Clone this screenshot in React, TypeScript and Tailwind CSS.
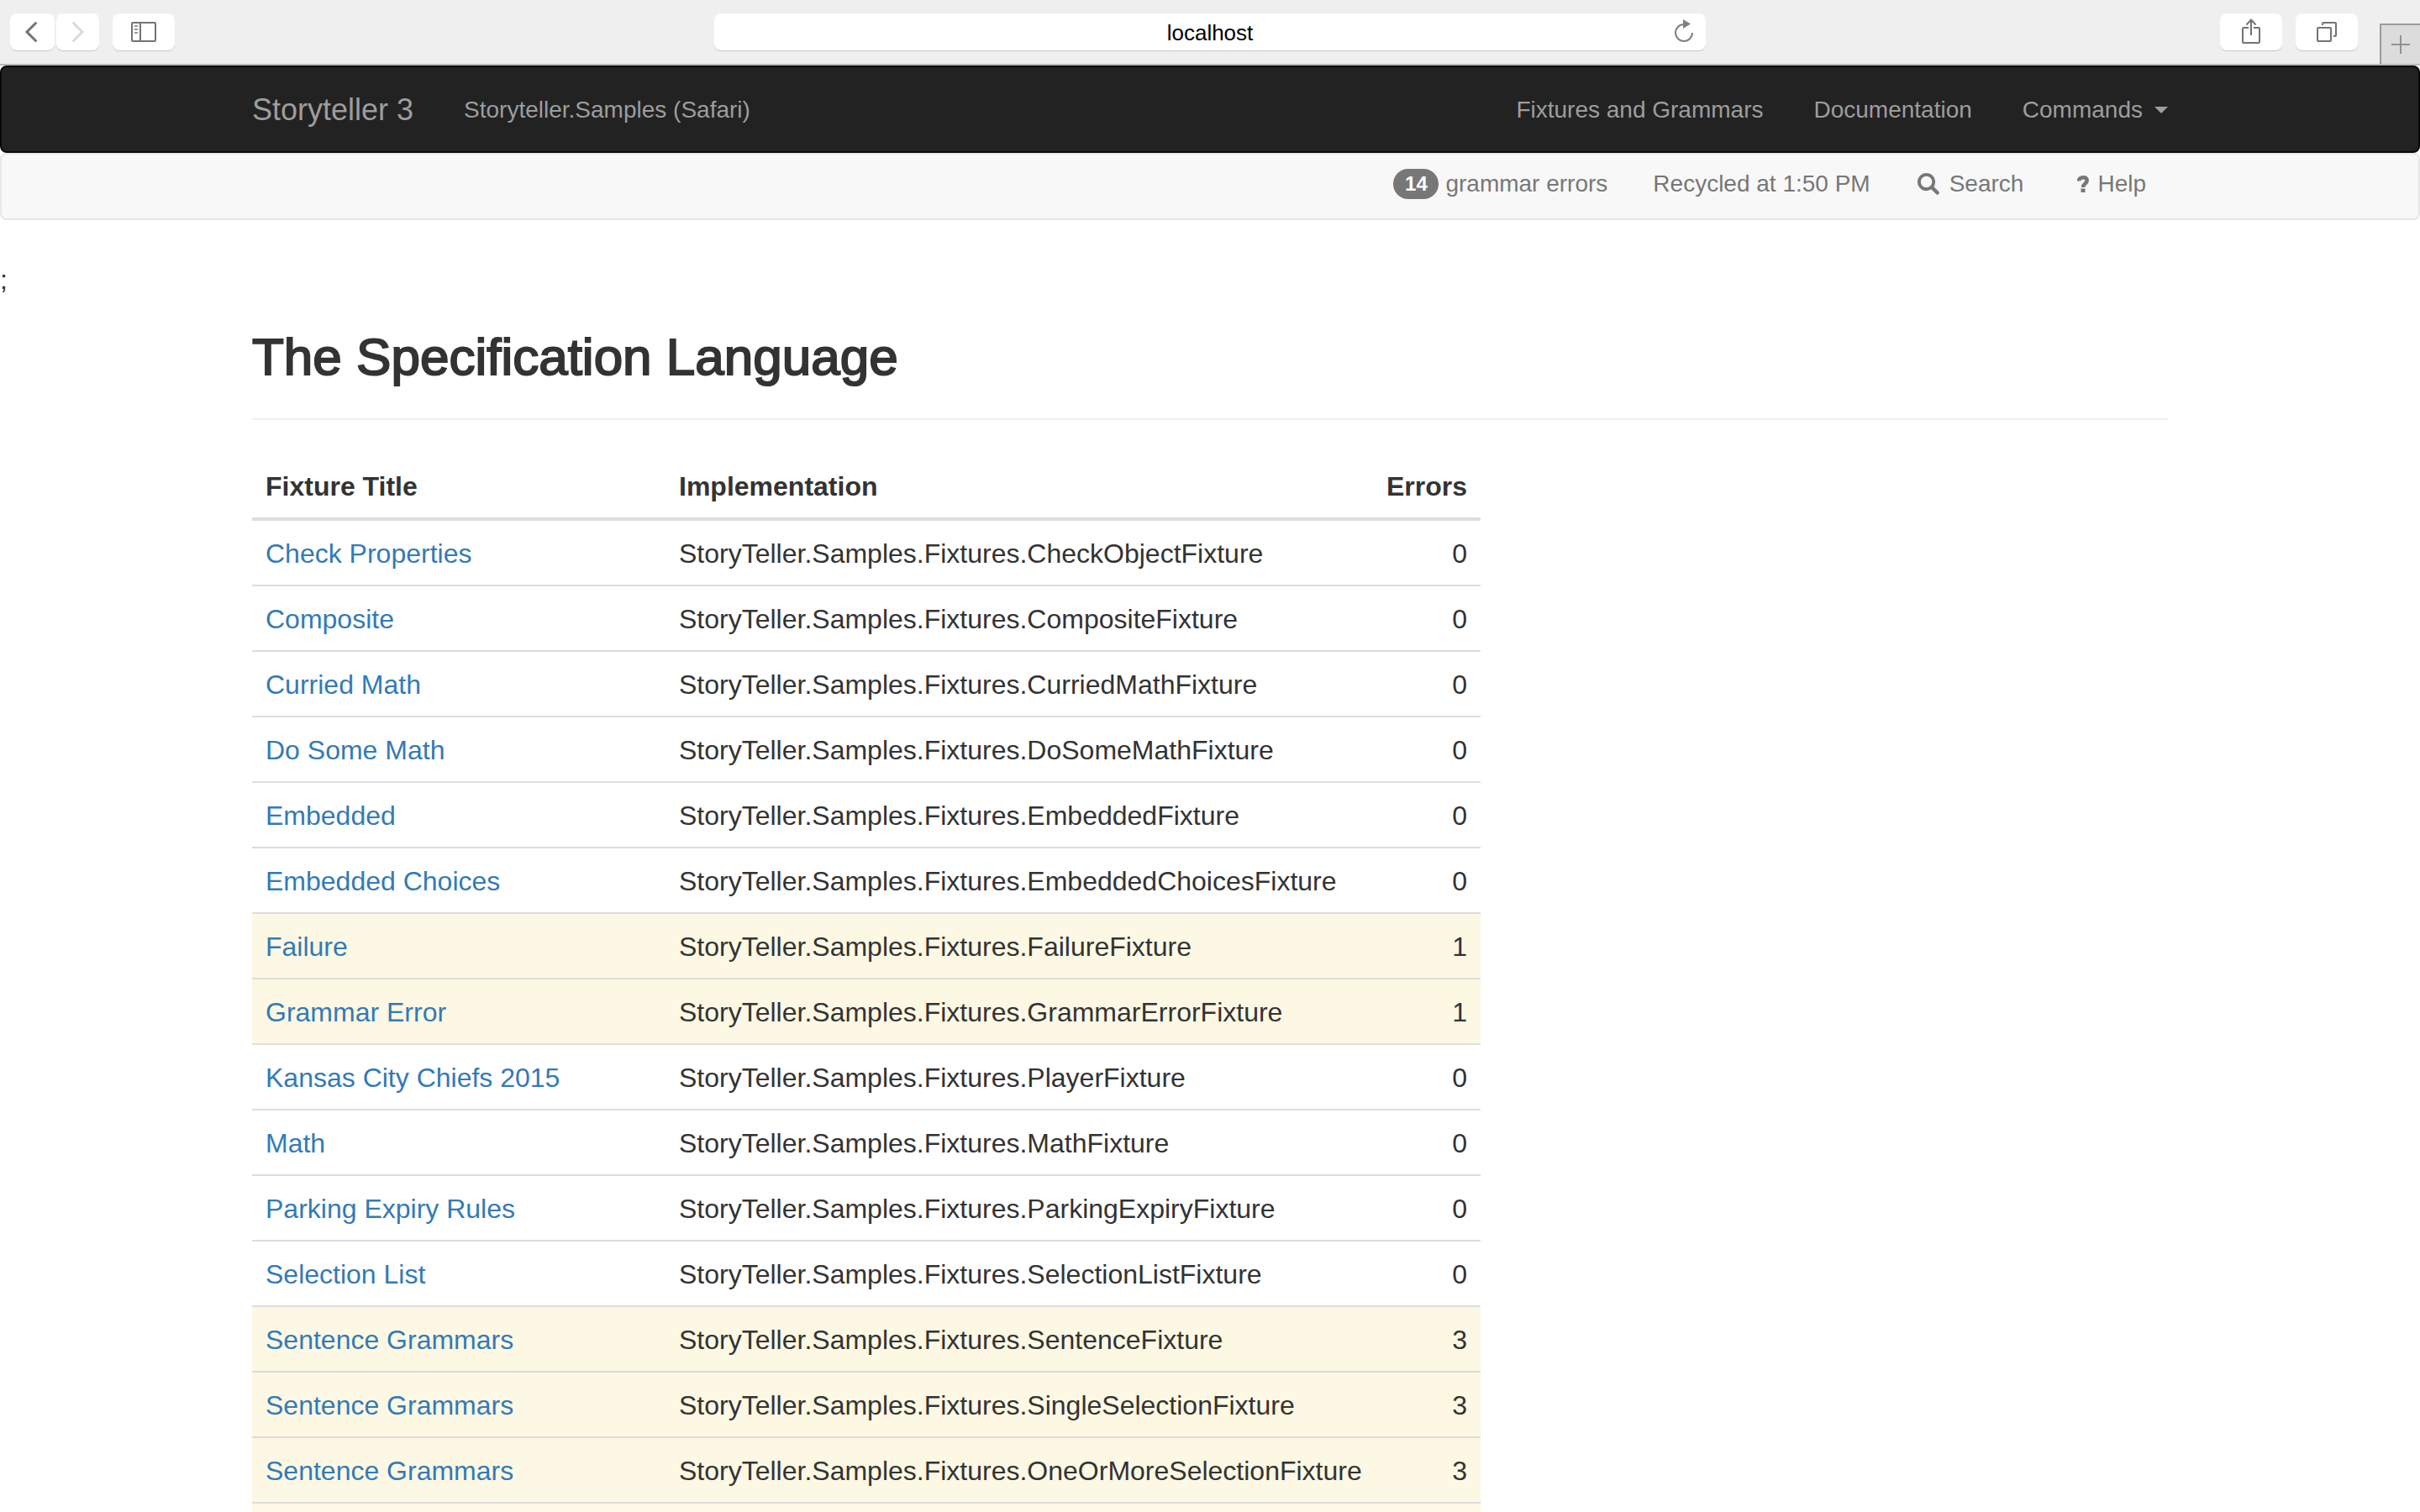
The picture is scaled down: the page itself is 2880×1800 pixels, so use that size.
import React from "react";

type Fixture = { title: string; name: string; errors: number };

const fixtures: Fixture[] = [
  { title: "Check Properties", name: "CheckObjectFixture", errors: 0 },
  { title: "Composite", name: "CompositeFixture", errors: 0 },
  { title: "Curried Math", name: "CurriedMathFixture", errors: 0 },
  { title: "Do Some Math", name: "DoSomeMathFixture", errors: 0 },
  { title: "Embedded", name: "EmbeddedFixture", errors: 0 },
  { title: "Embedded Choices", name: "EmbeddedChoicesFixture", errors: 0 },
  { title: "Failure", name: "FailureFixture", errors: 1 },
  { title: "Grammar Error", name: "GrammarErrorFixture", errors: 1 },
  { title: "Kansas City Chiefs 2015", name: "PlayerFixture", errors: 0 },
  { title: "Math", name: "MathFixture", errors: 0 },
  { title: "Parking Expiry Rules", name: "ParkingExpiryFixture", errors: 0 },
  { title: "Selection List", name: "SelectionListFixture", errors: 0 },
  { title: "Sentence Grammars", name: "SentenceFixture", errors: 3 },
  { title: "Sentence Grammars", name: "SingleSelectionFixture", errors: 3 },
  { title: "Sentence Grammars", name: "OneOrMoreSelectionFixture", errors: 3 },
];

const toolButton =
  "flex h-11 items-center justify-center rounded-lg bg-white shadow-[0_1px_0_#c6c6c6]";

function BrowserBar() {
  return (
    <header className="grid h-[78px] grid-cols-[1fr_1180px_1fr] border-b-2 border-[#b9b9b9] bg-[#efefef]">
      <div className="flex items-start pt-4 pl-3">
        <button aria-label="Back" className={`${toolButton} mr-0.5 w-[53px] pr-1`}>
          <svg width="16" height="26" viewBox="0 0 16 26" fill="none" stroke="#737373" strokeWidth="3" strokeLinecap="round">
            <path d="M13.500 2.500 3 13l10.500 10.500" />
          </svg>
        </button>
        <button aria-label="Forward" className={`${toolButton} mr-4 w-[51px]`}>
          <svg width="16" height="26" viewBox="0 0 16 26" fill="none" stroke="#dadada" strokeWidth="3" strokeLinecap="round">
            <path d="M2.500 2.500 13 13 2.500 23.500" />
          </svg>
        </button>
        <button aria-label="Show sidebar" className={`${toolButton} w-[74px]`}>
          <svg width="30" height="24" viewBox="0 0 30 24" fill="none" stroke="#737373" strokeWidth="2">
            <rect x="1" y="1" width="28" height="22" rx="1" />
            <path d="M11 1v22" />
            <path d="M4 5h4M4 9h4M4 13h4" stroke="#999" />
          </svg>
        </button>
      </div>
      <div className="mt-4 flex h-11 items-center rounded-lg bg-white pr-3.5 pl-[38px] shadow-[0_1px_0_#c6c6c6]">
        <input
          aria-label="Address"
          defaultValue="localhost"
          className="min-w-0 flex-1 bg-transparent pt-0.5 text-center text-[26px] leading-10 text-black outline-none"
        />
        <button aria-label="Reload">
          <svg width="24" height="32" viewBox="0 0 24 32" fill="none" stroke="#808080" strokeWidth="2">
            <path d="M12 7A10 10 0 1 0 22 17" />
            <path d="M11 1v11l9-5.500z" fill="#808080" stroke="none" />
          </svg>
        </button>
      </div>
      <div className="flex items-start justify-end">
        <button aria-label="Share" className={`${toolButton} mt-4 mr-4 w-[74px]`}>
          <svg width="22" height="30" viewBox="0 0 22 30" className="-mt-0.5" fill="none" stroke="#737373" strokeWidth="2">
            <path d="M8 11H2a1 1 0 0 0-1 1v16a1 1 0 0 0 1 1h18a1 1 0 0 0 1-1V12a1 1 0 0 0-1-1h-6" />
            <path d="M11 20V1.500M5.500 7.500 11 1.500l5.500 6" />
          </svg>
        </button>
        <button aria-label="Show all tabs" className={`${toolButton} mt-4 mr-[26px] w-[74px]`}>
          <svg width="24" height="24" viewBox="0 0 24 24" fill="none" stroke="#737373" strokeWidth="2">
            <rect x="1" y="7" width="16" height="16" rx="1" />
            <path d="M7 4V2a1 1 0 0 1 1-1h14a1 1 0 0 1 1 1v14a1 1 0 0 1-1 1h-2" />
          </svg>
        </button>
        <button
          aria-label="New tab"
          className="mt-7 flex h-12 w-12 items-center justify-center border-t-2 border-l-2 border-[#9c9c9c] bg-[#dcdcdc]"
        >
          <svg width="22" height="22" viewBox="0 0 22 22" stroke="#929292" strokeWidth="2">
            <path d="M11 0v22M0 11h22" />
          </svg>
        </button>
      </div>
    </header>
  );
}

function NavBar() {
  return (
    <nav className="rounded-lg border-2 border-[#080808] bg-[#222]">
      <div className="mx-auto flex h-[100px] max-w-[2340px] items-center px-[30px] pt-0.5 text-[28px] leading-10 text-[#9d9d9d]">
        <a href="#home" className="mr-[60px] text-[36px]">Storyteller 3</a>
        <a href="#project">Storyteller.Samples (Safari)</a>
        <div className="ml-auto flex gap-[60px]">
          <a href="#fixtures">Fixtures and Grammars</a>
          <a href="#docs">Documentation</a>
          <button className="flex items-center gap-3.5">
            Commands
            <svg width="16" height="8" viewBox="0 0 16 8" fill="#9d9d9d">
              <path d="M0 0h16L8 8z" />
            </svg>
          </button>
        </div>
      </div>
    </nav>
  );
}

function StatusBar() {
  return (
    <div className="rounded-lg border-2 border-[#e7e7e7] bg-[#f8f8f8]">
      <div className="mx-auto flex h-[76px] max-w-[2340px] items-start justify-end pt-[15px] pr-14 text-[28px] leading-10 text-[#777]">
        <a href="#errors" className="mr-[54px] flex items-center gap-2">
          <span className="flex h-9 w-[54px] items-center justify-center rounded-full bg-[#777] text-2xl font-bold text-white">
            14
          </span>
          grammar errors
        </a>
        <span className="mr-14">Recycled at 1:50 PM</span>
        <button className="mr-16 flex items-center gap-3">
          <svg width="26" height="26" viewBox="0 0 27 27" fill="none" stroke="#777">
            <circle cx="11" cy="11" r="9" strokeWidth="4" />
            <path d="m18 18 6.500 6.500" strokeWidth="4.500" strokeLinecap="round" />
          </svg>
          Search
        </button>
        <button className="flex items-center gap-2.5">
          <svg width="14" height="20" viewBox="0 0 14 20" fill="none" stroke="#777">
            <path d="M2 6.500C2 3.800 4 2.300 7 2.300s4.700 1.400 4.700 3.700C11.700 9.500 7 9.500 7 14" strokeWidth="4.500" />
            <path d="M4.500 15.500h5V20h-5z" fill="#777" stroke="none" />
          </svg>
          Help
        </button>
      </div>
    </div>
  );
}

function FixtureTable() {
  return (
    <table className="w-[1462px] table-fixed border-separate border-spacing-0 text-[32px] leading-[44px]">
      <thead>
        <tr className="text-left">
          <th className="w-[492px] border-b-4 border-[#ddd] px-4 pt-[17px] pb-[15px]">Fixture Title</th>
          <th className="border-b-4 border-[#ddd] px-4 pt-[17px] pb-[15px]">Implementation</th>
          <th className="w-[130px] border-b-4 border-[#ddd] px-4 pt-[17px] pb-[15px] text-right">Errors</th>
        </tr>
      </thead>
      <tbody>
        {fixtures.map((f) => (
          <tr key={f.name} className={f.errors > 0 ? "bg-[#fcf8e3]" : "bg-white"}>
            <td className="border-b-2 border-[#ddd] px-4 pt-[17px] pb-[15px]">
              <a href={`#${f.name}`} className="text-[#337ab7]">{f.title}</a>
            </td>
            <td className="border-b-2 border-[#ddd] px-4 pt-[17px] pb-[15px]">StoryTeller.Samples.Fixtures.{f.name}</td>
            <td className="border-b-2 border-[#ddd] px-4 pt-[17px] pb-[15px] text-right">{f.errors}</td>
          </tr>
        ))}
        <tr className="h-[78px] bg-[#fcf8e3]">
          <td colSpan={3} />
        </tr>
      </tbody>
    </table>
  );
}

export default function App() {
  return (
    <div className="h-screen overflow-hidden bg-white font-['Liberation_Sans',Arial,sans-serif] text-[#333]">
      <BrowserBar />
      <NavBar />
      <StatusBar />
      <p className="mt-[52px] text-[32px] leading-[38px]">;</p>
      <main className="mx-auto max-w-[2340px] px-[30px]">
        <h1 className="mt-10 border-b-2 border-[#eee] pb-10 text-[62px] leading-[66px] font-medium [-webkit-text-stroke:2px_#333]">
          The Specification Language
        </h1>
        <div className="mt-10">
          <FixtureTable />
        </div>
      </main>
    </div>
  );
}
